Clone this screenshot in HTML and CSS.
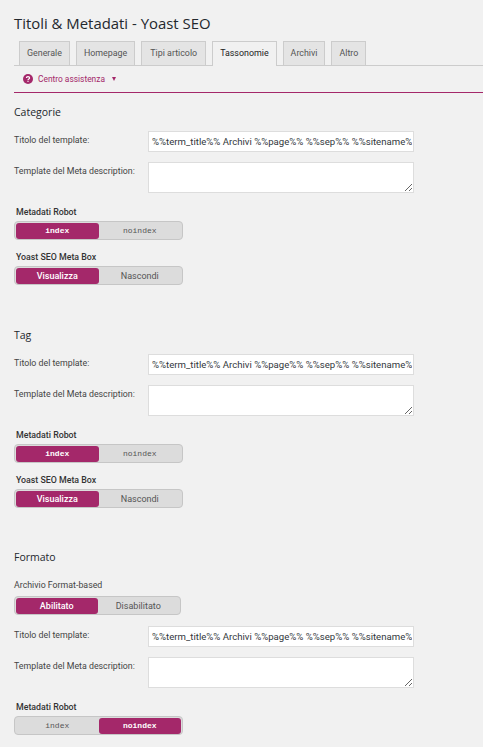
FILE: index.html
```html
<!DOCTYPE html>
<html lang="it">
<head>
  <meta charset="UTF-8">
  <title>Titoli &amp; Metadati - Yoast SEO</title>
  <link rel="stylesheet" href="styles.css">
</head>
<body>
  <h1>Titoli &amp; Metadati - Yoast SEO</h1>

  <div class="tabs">
    <a class="tab" href="#">Generale</a>
    <a class="tab" href="#">Homepage</a>
    <a class="tab wide" href="#">Tipi articolo</a>
    <a class="tab active" href="#">Tassonomie</a>
    <a class="tab" href="#">Archivi</a>
    <a class="tab" href="#">Altro</a>
  </div>

  <div class="help">
    <svg class="help-icon" viewBox="0 0 10 10" width="10" height="10">
      <circle cx="5" cy="5" r="5" fill="#a4286a"/>
      <path d="M3.4 3.9 C3.4 2.2 6.6 2.2 6.6 3.9 C6.6 5 5 4.9 5 6" fill="none" stroke="#fff" stroke-width="1.2"/>
      <rect x="4.4" y="6.7" width="1.2" height="1.2" fill="#fff"/>
    </svg>
    <span class="help-text">Centro assistenza</span>
    <span class="help-arrow"></span>
  </div>

  <section class="group">
    <h2>Categorie</h2>
    <div class="field">
      <label>Titolo del template:</label>
      <input type="text" value="%%term_title%% Archivi %%page%% %%sep%% %%sitename%%">
    </div>
    <div class="field">
      <label>Template del Meta description:</label>
      <textarea></textarea>
    </div>
    <div class="toggle-label">Metadati Robot</div>
    <div class="toggle mono"><span class="on">index</span><span>noindex</span></div>
    <div class="toggle-label">Yoast SEO Meta Box</div>
    <div class="toggle"><span class="on">Visualizza</span><span>Nascondi</span></div>
  </section>

  <section class="group">
    <h2>Tag</h2>
    <div class="field">
      <label>Titolo del template:</label>
      <input type="text" value="%%term_title%% Archivi %%page%% %%sep%% %%sitename%%">
    </div>
    <div class="field">
      <label>Template del Meta description:</label>
      <textarea></textarea>
    </div>
    <div class="toggle-label">Metadati Robot</div>
    <div class="toggle mono"><span class="on">index</span><span>noindex</span></div>
    <div class="toggle-label">Yoast SEO Meta Box</div>
    <div class="toggle"><span class="on">Visualizza</span><span>Nascondi</span></div>
  </section>

  <section class="group">
    <h2>Formato</h2>
    <div class="plain-label">Archivio Format-based</div>
    <div class="toggle narrow"><span class="on">Abilitato</span><span>Disabilitato</span></div>
    <div class="field">
      <label>Titolo del template:</label>
      <input type="text" value="%%term_title%% Archivi %%page%% %%sep%% %%sitename%%">
    </div>
    <div class="field">
      <label>Template del Meta description:</label>
      <textarea></textarea>
    </div>
    <div class="toggle-label">Metadati Robot</div>
    <div class="toggle mono"><span>index</span><span class="on">noindex</span></div>
  </section>
</body>
</html>
```

FILE: styles.css
```css
html, body { height: 747px; overflow: hidden; }
body {
  margin: 0;
  padding: 0 0 0 14px;
  background-color: #f1f1f1;
  color: #444;
  font-family: Roboto, "Open Sans", sans-serif;
  font-size: 8.8px;
}

h1 {
  margin: 0;
  padding-top: 12px;
  height: 41px;
  box-sizing: border-box;
  font-family: "Open Sans", sans-serif;
  font-size: 14.9px;
  line-height: 22px;
  font-weight: 400;
  color: #23282d;
}

.tabs {
  display: flex;
  gap: 6px;
  height: 25px;
  box-sizing: border-box;
  padding-left: 5px;
  border-bottom: 1px solid #ccc;
}
.tab {
  height: 24px;
  box-sizing: border-box;
  padding: 0 7px;
  line-height: 23px;
  background-color: #e4e4e4;
  border: 1px solid #ccc;
  border-bottom: 0;
  color: #555;
  text-decoration: none;
  font-size: 8.9px;
}
.tab.wide { padding: 0 8px; }
.tab.active {
  height: 25px;
  background-color: #f1f1f1;
  color: #222;
}

.help {
  display: flex;
  align-items: center;
  height: 26px;
  padding-left: 9px;
  border-bottom: 1px solid #a4286a;
  color: #a4286a;
}
.help-icon { margin-right: 5px; }
.help-text { font-size: 8.4px; }
.help-arrow {
  margin-left: 7px;
  border-top: 4px solid #a4286a;
  border-left: 2.5px solid transparent;
  border-right: 2.5px solid transparent;
}

.group { height: 222.5px; }
h2 {
  margin: 0;
  padding-top: 12px;
  height: 38px;
  box-sizing: border-box;
  font-family: "Open Sans", sans-serif;
  font-size: 10.5px;
  line-height: 15px;
  font-weight: 400;
  color: #23282d;
}

.field { display: flex; margin-bottom: 10px; }
.field label {
  width: 134px;
  flex: none;
  line-height: 18px;
}
input, textarea {
  display: block;
  width: 266px;
  box-sizing: border-box;
  margin: 0;
  background: #fff;
  border: 1px solid #ddd;
  color: #32373c;
  font-family: Roboto, "Open Sans", sans-serif;
  font-size: 9.6px;
  padding: 0 1px 0 3px;
  outline: none;
}
input { height: 21px; }
textarea { height: 31px; }

.field + .toggle-label { margin-top: 13px; }
.toggle-label {
  padding-left: 2px;
  height: 15px;
  line-height: 13px;
  font-weight: 500;
  color: #333;
}
.plain-label {
  height: 15px;
  line-height: 13px;
  margin-top: 3px;
  margin-bottom: 2px;
}

.toggle {
  display: flex;
  width: 169px;
  height: 19px;
  box-sizing: border-box;
  padding: 1px 1px 0;
  margin-bottom: 11px;
  background-color: #dcdcdc;
  border: 1px solid #c6c6c6;
  border-radius: 4px;
}
.toggle span {
  flex: 1;
  text-align: center;
  line-height: 16px;
  font-size: 9px;
  color: #555;
}
.toggle .on {
  background-color: #a4286a;
  color: #fff;
  font-weight: 500;
  border-radius: 3px;
}
.toggle.mono span { font-family: "Liberation Mono", monospace; font-size: 8px; }
.toggle.mono .on { font-weight: 700; }
.toggle.narrow { width: 167px; }
```
